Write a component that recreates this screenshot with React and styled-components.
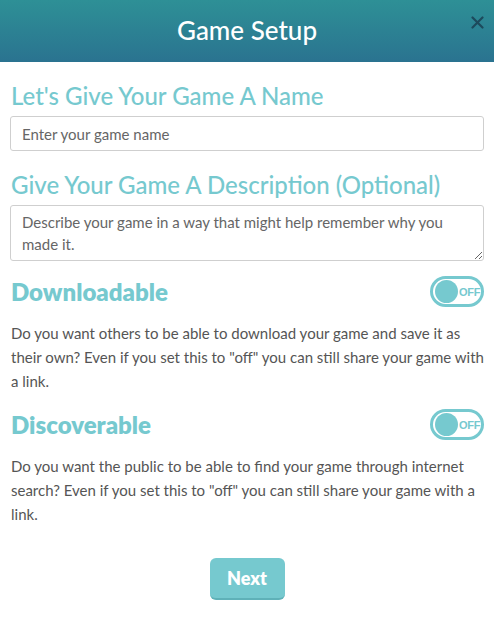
import React, { useState } from "react";
import styled, { createGlobalStyle } from "styled-components";

const GlobalStyle = createGlobalStyle`
  body {
    margin: 0;
    background: #fff;
    font-family: Lato, "Open Sans", sans-serif;
  }
  * {
    box-sizing: border-box;
  }
`;

const teal = "#76c9cf";

const Modal = styled.div`
  width: 494px;
  min-height: 628px;
  background: #fff;
`;

const Header = styled.header`
  position: relative;
  height: 62px;
  background: linear-gradient(to bottom, #2e9096, #2a7390);
  display: flex;
  align-items: center;
  justify-content: center;
`;

const Title = styled.h1`
  margin: 0;
  color: #fff;
  font-size: 26px;
  font-weight: 500;
  padding-bottom: 3px;
`;

const Close = styled.button`
  position: absolute;
  right: 6px;
  top: 11px;
  width: 22px;
  height: 22px;
  padding: 0;
  border: none;
  background: none;
  cursor: pointer;
  display: flex;
  align-items: center;
  justify-content: center;
`;

const Body = styled.div`
  padding: 20px 10px 0;
`;

const Label = styled.h2`
  margin: 0 0 6px 1px;
  color: ${teal};
  font-size: 24px;
  font-weight: 500;
  line-height: 28px;
`;

const TextInput = styled.input`
  display: block;
  width: 100%;
  height: 35px;
  padding: 0 11px;
  border: 1px solid #cfcfcf;
  border-radius: 3px;
  font-family: inherit;
  font-size: 15px;
  color: #444;
  margin-bottom: 20px;
  &::placeholder {
    color: #666;
  }
`;

const TextArea = styled.textarea`
  display: block;
  width: 100%;
  height: 56px;
  padding: 5px 11px;
  border: 1px solid #cfcfcf;
  border-radius: 3px;
  font-family: inherit;
  font-size: 15px;
  line-height: 22px;
  color: #444;
  margin-bottom: 15px;
  &::placeholder {
    color: #666;
  }
`;

const Section = styled.section`
  margin-bottom: 16px;
`;

const SectionHead = styled.div`
  display: flex;
  align-items: center;
  justify-content: space-between;
  margin-bottom: 14px;
`;

const SectionTitle = styled.h3`
  margin: 0 0 0 1px;
  color: ${teal};
  font-size: 24px;
  font-weight: 800;
`;

const Toggle = styled.button`
  width: 54px;
  height: 31px;
  border: 3px solid ${teal};
  border-radius: 16px;
  background: #fff;
  padding: 0 2px;
  display: flex;
  align-items: center;
  gap: 1px;
  cursor: pointer;
`;

const Knob = styled.span`
  width: 23px;
  height: 23px;
  border-radius: 50%;
  background: ${teal};
  flex: none;
`;

const ToggleText = styled.span`
  color: ${teal};
  font-family: inherit;
  font-size: 11px;
  font-weight: 800;
  letter-spacing: -0.3px;
`;

const Text = styled.p`
  margin: 0 0 0 1px;
  color: #555;
  font-size: 15px;
  line-height: 24px;
`;

const Footer = styled.div`
  display: flex;
  justify-content: center;
  padding-top: 16px;
`;

const NextButton = styled.button`
  width: 75px;
  height: 42px;
  border: none;
  border-bottom: 2px solid #5fb1b8;
  border-radius: 6px;
  background: ${teal};
  color: #fff;
  font-family: inherit;
  font-size: 18px;
  font-weight: 800;
  cursor: pointer;
`;

const Switch = ({ on, onClick }) => (
  <Toggle onClick={onClick}>
    <Knob />
    <ToggleText>{on ? "ON" : "OFF"}</ToggleText>
  </Toggle>
);

export default function App() {
  const [download, setDownload] = useState(false);
  const [discover, setDiscover] = useState(false);

  return (
    <Modal>
      <GlobalStyle />
      <Header>
        <Title>Game Setup</Title>
        <Close aria-label="Close">
          <svg width="13" height="13" viewBox="0 0 13 13">
            <path d="M1.5 1.5l10 10M11.5 1.5l-10 10" stroke="#1d4a5c" strokeWidth="2.2" strokeLinecap="round" />
          </svg>
        </Close>
      </Header>
      <Body>
        <Label>Let's Give Your Game A Name</Label>
        <TextInput placeholder="Enter your game name" />
        <Label>Give Your Game A Description (Optional)</Label>
        <TextArea placeholder="Describe your game in a way that might help remember why you made it." />

        <Section>
          <SectionHead>
            <SectionTitle>Downloadable</SectionTitle>
            <Switch on={download} onClick={() => setDownload(!download)} />
          </SectionHead>
          <Text>
            Do you want others to be able to download your game and save it as their own? Even if you set this to
            "off" you can still share your game with a link.
          </Text>
        </Section>

        <Section>
          <SectionHead>
            <SectionTitle>Discoverable</SectionTitle>
            <Switch on={discover} onClick={() => setDiscover(!discover)} />
          </SectionHead>
          <Text>
            Do you want the public to be able to find your game through internet search? Even if you set this to
            "off" you can still share your game with a link.
          </Text>
        </Section>

        <Footer>
          <NextButton>Next</NextButton>
        </Footer>
      </Body>
    </Modal>
  );
}
